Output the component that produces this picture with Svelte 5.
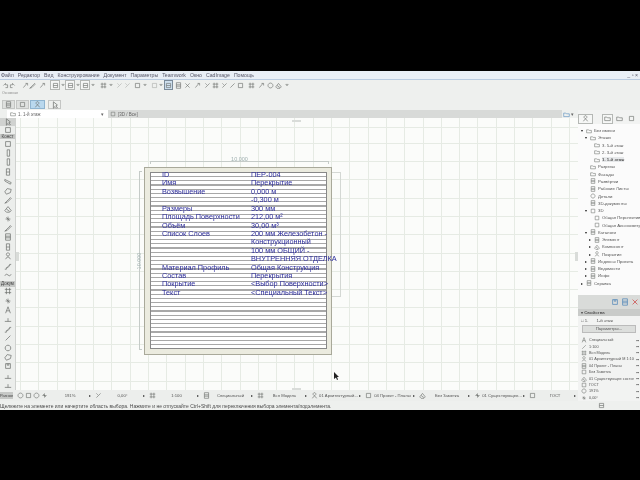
<script>
	const menu = ['Файл', 'Редактор', 'Вид', 'Конструирование', 'Документ', 'Параметры', 'Teamwork', 'Окно', 'CadImage', 'Помощь'];

	const icons = {
		undo: 'M2 5 L5 2 V4 H8 V8 H5',
		redo: 'M8 5 L5 2 V4 H2 V8 H5',
		pick: 'M2 8 L7 2 M5 2 H8 V5',
		drop: 'M1 9 L6 4 L8 2 L9 3 L4 8 Z',
		box: 'M2 2 H8 V8 H2 Z',
		boxl: 'M2 2 H8 V8 H2 Z M2 5 H8',
		hash: 'M3 1 V9 M7 1 V9 M1 3 H9 M1 7 H9',
		slash: 'M2 8 L8 2 M2 2 L4 4',
		wave: 'M1 6 Q3 2 5 5 T9 4',
		arrow: 'M3 1 L3 9 L5 7 L7 9 L8 8 L6 6 L8 5 Z',
		wall: 'M1 8 L3 2 L9 4 L7 9 Z',
		col: 'M4 1 H7 V9 H4 Z',
		beam: 'M1 3 L9 7 L8 9 L1 5 Z',
		slab: 'M1 6 L4 2 L9 3 L8 7 L3 9 Z',
		roof: 'M1 7 L5 2 L9 7 L7 9 H3 Z M3 5 L7 8',
		door: 'M3 1 H7 V9 H3 Z M3 5 H7',
		stair: 'M1 9 H3 V7 H5 V5 H7 V3 H9',
		circle: 'M5 1.5 A3.5 3.5 0 1 1 4.9 1.5 Z',
		text: 'M5 1 L2 9 M5 1 L8 9 M3 6 H7',
		line: 'M2 8 L8 2',
		dot: 'M1 8 H9 M5 8 L5 4',
		cross: 'M2 5 H8 M5 2 V8 M3 3 L7 7',
		folder: 'M1 3 H4 L5 4 H9 V8 H1 Z',
		sheet: 'M2 1 H8 V9 H2 Z M2 4 H8 M2 6 H8',
		person: 'M5 1 A2 2 0 1 1 4.9 1 Z M2 9 Q5 3 8 9',
		save: 'M2 2 H8 V8 H2 Z M4 2 V4 H6 V2',
		del: 'M2 2 L8 8 M8 2 L2 8',
		tri: 'M3 4 H7 L5 6.5 Z'
	};

	// icon, width, gap after, class
	const row1 = [
		['undo', 7, 0], ['redo', 7, 6], ['pick', 7, 0], ['drop', 7, 3], ['pick', 7, 4],
		['boxl', 10, 0, 'frame'], ['tri', 5, 0], ['boxl', 10, 0, 'frame'], ['tri', 5, 0], ['boxl', 10, 0, 'frame'], ['tri', 5, 4],
		['hash', 8, 1], ['tri', 5, 3], ['slash', 7, 1, 'dim'], ['slash', 7, 2, 'dim'], ['box', 8, 1], ['tri', 5, 3], ['box', 8, 0, 'dim'], ['tri', 5, 1],
		['boxl', 9, 1, 'frame on'], ['sheet', 8, 1], ['del', 8, 2], ['pick', 8, 2], ['slash', 8, 0], ['hash', 8, 1], ['slash', 8, 0],
		['line', 8, 0], ['box', 8, 3], ['hash', 8, 2], ['pick', 8, 1], ['circle', 8, 0], ['roof', 8, 2], ['tri', 5, 0]
	];

	const tools1 = ['box', 'col', 'col', 'door', 'beam', 'slab', 'drop', 'roof', 'cross', 'drop', 'sheet', 'door', 'person', 'stair', 'wave'];
	const tools2 = ['hash', 'cross', 'text', 'dot', 'stair', 'line', 'circle', 'slab', 'save', 'dot', 'dot'];

	const rows = [
		['ID', 'ПЕР-004'],
		['Имя', 'Перекрытие'],
		['Возвышение', '0,000 м'],
		['', '-0,300 м'],
		['Размеры', '300 мм'],
		['Площадь Поверхности', '212,00 м²'],
		['Объём', '30,00 м³'],
		['Список Слоев', '200 мм  Железобетон -'],
		['', 'Конструкционный'],
		['', '100 мм  ОБЩИЙ -'],
		['', 'ВНУТРЕННЯЯ ОТДЕЛКА'],
		['Материал Профиль', 'Общая Конструкция'],
		['Состав', 'Перекрытия'],
		['Покрытие', '<Выбор Поверхности>'],
		['Текст', '<Специальный Текст>']
	];

	// level, icon, name, expander, selected
	const tree = [
		[0, 'folder', 'Без имени', '▾'], [1, 'folder', 'Этажи', '▾'], [2, 'folder', '3. 5-й этаж'], [2, 'folder', '2. 3-й этаж'],
		[2, 'folder', '1. 1-й этаж', '', true], [1, 'folder', 'Разрезы'], [1, 'folder', 'Фасады'], [1, 'sheet', 'Развёртки'],
		[1, 'sheet', 'Рабочие Листы'], [1, 'circle', 'Детали'], [1, 'sheet', '3D-документы'], [1, 'box', '3D', '▾'],
		[2, 'box', 'Общая Перспектива'], [2, 'box', 'Общая Аксонометрия'], [1, 'sheet', 'Каталоги', '▾'], [2, 'sheet', 'Элемент', '▸'],
		[2, 'roof', 'Компонент', '▸'], [2, 'person', 'Покрытие', '▸'], [1, 'sheet', 'Индексы Проекта', '▸'], [1, 'sheet', 'Ведомости', '▸'],
		[1, 'sheet', 'Инфо', '▸'], [0, 'sheet', 'Справка', '▸']
	];

	const props = [
		['text', 'Специальный'], ['line', '1:100'], ['hash', 'Вся Модель'], ['person', '01 Архитектурный М 1:100'],
		['sheet', '04 Проект - Планы'], ['box', 'Без Заметка'], ['roof', '01 Существующее состоян...'],
		['box', 'ГОСТ'], ['circle', '191%'], ['cross', '0,00°']
	];

	const status = [
		['', '191%', 44], ['slash', '0,00°', 54], ['hash', '1:100', 54], ['sheet', 'Специальный', 54], ['hash', 'Вся Модель', 54],
		['person', '01 Архитектурный...', 54], ['box', '04 Проект - Планы', 54], ['roof', 'Без Заметка', 55],
		['cross', '01 Существующее...', 55], ['box', 'ГОСТ', 51]
	];
</script>

{#snippet ico(name, size = 8)}
	<svg class="ico" width={size} height={size} viewBox="0 0 10 10"><path d={icons[name]} /></svg>
{/snippet}

<div class="bar"></div>
<div class="app">
	<div class="menu">
		{#each menu as m}<span>{m}</span>{/each}
		<span class="winbtns">_ ▫ ×</span>
	</div>

	<div class="tb1">
		{#each row1 as [name, w, gap, cls]}
			<span class="tbi {cls || ''}" style="width:{w}px;margin-right:{gap}px">{@render ico(name, name === 'tri' ? 6 : 7)}</span>
		{/each}
	</div>

	<div class="tb2">
		<div class="tblabel">Основная</div>
		<div class="tbrow">
			<span class="btn">{@render ico('sheet', 7)}</span>
			<span class="btn">{@render ico('box', 7)}</span>
			<span class="btn blue">{@render ico('person', 7)}</span>
			<span class="btn flat">{@render ico('arrow', 8)}</span>
		</div>
	</div>

	<div class="work">
		<div class="left">
			<div class="tabs">
				<div class="tab">{@render ico('folder', 6)}<span>1. 1-й этаж</span><i>▾</i></div>
				<div class="tabrest">{@render ico('box', 6)}<span>[3D / Все]</span></div>
				<div class="tabend">{@render ico('folder', 7)}<i>▾</i></div>
			</div>

			<div class="main">
				<div class="toolbox">
					<span class="tool top current">{@render ico('arrow', 8)}</span>
					<span class="tool top">{@render ico('box', 8)}</span>
					<div class="tlabel">Конст</div>
					{#each tools1 as t}<span class="tool">{@render ico(t, 8)}</span>{/each}
					<div class="tlabel gap">Докум</div>
					{#each tools2 as t}<span class="tool">{@render ico(t, 8)}</span>{/each}
				</div>

				<div class="canvas">
					<div class="dim-h"><span>10.000</span></div>
					<div class="dim-v"><span>10.000</span></div>
					<div class="bracket"></div>
					<div class="mark m-top"></div>
					<div class="mark m-bottom"></div>
					<div class="mark m-left"></div>
					<div class="mark m-right"></div>
					<div class="slab">
						<div class="hatch">
							<div class="label">
								{#each rows as [k, v]}
									<span>{k}</span><span>{v}</span>
								{/each}
							</div>
						</div>
					</div>
					<svg class="cursor" width="6" height="9" viewBox="0 0 6 9"><path d="M0 0 V7 L2 5.5 L3 8 L4 7.5 L3 5 H5 Z" /></svg>
				</div>
			</div>

			<div class="status">
				<span class="ctl">
					<span class="other">Разное</span>
					{@render ico('circle', 7)}{@render ico('box', 7)}{@render ico('circle', 7)}{@render ico('cross', 7)}
				</span>
				{#each status as [icon, text, w]}
					<span class="cell" style="width:{w}px">
						{#if icon}{@render ico(icon, 7)}{/if}
						<span class="ctext">{text}</span>
						<i>▸</i>
					</span>
				{/each}
			</div>
		</div>

		<div class="side">
			<div class="sidetabs">
				<span class="tbi frame wide">{@render ico('person', 7)}</span>
				<span class="group">
					<span class="tbi frame">{@render ico('folder', 7)}</span>
					<span class="tbi">{@render ico('folder', 7)}</span>
					<span class="tbi">{@render ico('box', 7)}</span>
					<span class="tbi">{@render ico('sheet', 7)}</span>
				</span>
			</div>
			<div class="tree">
				{#each tree as [lvl, icon, name, exp, sel]}
					<div class="node" class:sel style="padding-left:{3 + lvl * 4}px"><i>{exp || ''}</i>{@render ico(icon, 6)}<span>{name}</span></div>
				{/each}
			</div>
			<div class="actions">
				<span class="act">{@render ico('save', 8)}</span>
				<span class="act">{@render ico('sheet', 8)}</span>
				<span class="act red">{@render ico('del', 8)}</span>
			</div>
			<div class="phead">▾ Свойства</div>
			<div class="floor"><span>□ 1.</span><span>1-й этаж</span></div>
			<div class="pbtn">Параметры...</div>
			<div class="pdiv"></div>
			{#each props as [icon, name]}
				<div class="prow">{@render ico(icon, 6)}<span class="pname">{name}</span><b>••</b></div>
			{/each}
		</div>
	</div>

	<div class="hint">
		<span>Щелкните на элементе или начертите область выбора. Нажмите и не отпускайте Ctrl+Shift для переключения выбора элемента/подэлемента.</span>
		<span class="hint-ico">{@render ico('boxl', 7)}</span>
	</div>
</div>
<div class="bar"></div>

<style>
	:global(body) {
		margin: 0;
		background: #000;
	}

	.bar {
		height: 71px;
		background: #000;
	}

	.bar:last-child {
		height: 70px;
	}

	.app {
		height: 339px;
		display: flex;
		flex-direction: column;
		background: #eef0ee;
		font-family: "Liberation Sans", sans-serif;
		color: #444;
		overflow: hidden;
		filter: blur(0.35px);
	}

	.ico {
		flex: none;
		fill: none;
		stroke: #6c6f6c;
		stroke-width: 0.9;
	}

	.menu {
		height: 9px;
		box-sizing: border-box;
		flex: none;
		display: flex;
		align-items: center;
		gap: 4px;
		padding-left: 1px;
		font-size: 5.2px;
		color: #556;
		background: #e9eff6;
		border-bottom: 1px solid #b9cbe0;
	}

	.winbtns {
		margin-left: auto;
		margin-right: 2px;
	}

	.tb1 {
		height: 10px;
		flex: none;
		display: flex;
		align-items: center;
		padding-left: 2px;
	}

	.tbi {
		height: 10px;
		display: inline-flex;
		align-items: center;
		justify-content: center;
		box-sizing: border-box;
		flex: none;
	}

	.dim {
		opacity: 0.5;
	}

	.frame {
		border: 1px solid #b5b8b5;
		background: #f6f7f6;
	}

	.on {
		background: #cfe0ee;
		border-color: #7b8b9a;
	}

	.tb2 {
		height: 20px;
		flex: none;
		box-sizing: border-box;
		padding: 1px 0 0 2px;
	}

	.tblabel {
		font-size: 3.5px;
		color: #888;
		height: 5px;
	}

	.tbrow {
		display: flex;
		gap: 1px;
		margin-top: 4px;
	}

	.btn {
		width: 13px;
		height: 9px;
		display: inline-flex;
		align-items: center;
		justify-content: center;
		background: #dfe1df;
		border: 1px solid #c4c6c4;
		box-sizing: border-box;
	}

	.blue {
		background: #b9d8ee;
		width: 15px;
		border-color: #8fb4d0;
	}

	.flat {
		background: #eef0ee;
		margin-left: 2px;
	}

	.work {
		flex: 1;
		display: flex;
		min-height: 0;
	}

	.left {
		width: 578px;
		flex: none;
		display: flex;
		flex-direction: column;
	}

	.tabs {
		height: 8px;
		flex: none;
		display: flex;
		align-items: stretch;
		font-size: 4.5px;
		color: #666;
	}

	.tab {
		width: 101px;
		margin-left: 7px;
		background: #fff;
		display: flex;
		align-items: center;
		gap: 2px;
		padding-left: 3px;
		box-sizing: border-box;
	}

	.tab i,
	.tabend i {
		margin-left: auto;
		margin-right: 4px;
		font-style: normal;
	}

	.tabrest {
		flex: 1;
		background: #d8dad8;
		display: flex;
		align-items: center;
		gap: 2px;
		padding-left: 2px;
	}

	.tabend {
		width: 16px;
		display: flex;
		align-items: center;
		padding-left: 1px;
		box-sizing: border-box;
	}

	.tabend .ico {
		stroke: #5b8fc0;
	}

	.main {
		height: 272px;
		flex: none;
		display: flex;
	}

	.toolbox {
		width: 16px;
		flex: none;
		display: flex;
		flex-direction: column;
		align-items: center;
		background: #eceeec;
		border-right: 1px solid #cfd1cf;
		box-sizing: border-box;
	}

	.tool {
		height: 9.38px;
		display: flex;
		align-items: center;
		flex: none;
	}

	.tool.top {
		height: 8px;
	}

	.current {
		width: 100%;
		justify-content: center;
		background: #d0d2d0;
	}

	.tlabel {
		width: 100%;
		height: 5px;
		line-height: 5px;
		font-size: 4.5px;
		background: #c6c8c6;
		color: #444;
		text-align: center;
		overflow: hidden;
		flex: none;
	}

	.tlabel.gap {
		height: 6px;
		line-height: 6px;
		margin-top: 1px;
	}

	.canvas {
		flex: 1;
		position: relative;
		background-color: #fbfcfa;
		background-image:
			repeating-linear-gradient(90deg, #e6ebe4 0 1px, transparent 1px 18.3px),
			repeating-linear-gradient(0deg, #e6ebe4 0 1px, transparent 1px 18.3px);
		background-position: 4px 0, 0 10px;
	}

	.dim-h {
		position: absolute;
		left: 134px;
		top: 43px;
		width: 179px;
		height: 3px;
		border: 1px solid #c5cbc8;
		border-bottom: 0;
		box-sizing: border-box;
	}

	.dim-h span {
		position: absolute;
		top: -6px;
		left: 0;
		right: 0;
		text-align: center;
		font-size: 5.5px;
		color: #9fb0b0;
	}

	.dim-v {
		position: absolute;
		left: 123px;
		top: 53px;
		width: 3px;
		height: 179px;
		border: 1px solid #c5cbc8;
		border-right: 0;
		box-sizing: border-box;
	}

	.dim-v span {
		position: absolute;
		left: -13px;
		top: 86px;
		width: 24px;
		text-align: center;
		font-size: 5.5px;
		color: #9fb0b0;
		transform: rotate(-90deg);
	}

	.bracket {
		position: absolute;
		left: 316px;
		top: 54px;
		width: 9px;
		height: 125px;
		border: 1px solid #d4d8d4;
		border-left: 0;
		box-sizing: border-box;
	}

	.mark {
		position: absolute;
		background: #d9dcd9;
	}

	.m-top {
		left: 276px;
		top: 2px;
		width: 9px;
		height: 2px;
	}

	.m-bottom {
		left: 276px;
		top: 270px;
		width: 9px;
		height: 2px;
	}

	.m-left {
		left: 0;
		top: 134px;
		width: 3px;
		height: 9px;
	}

	.m-right {
		right: 0;
		top: 134px;
		width: 3px;
		height: 9px;
	}

	.slab {
		position: absolute;
		left: 128px;
		top: 49px;
		width: 188px;
		height: 188px;
		padding: 4px 4px 5px 5px;
		box-sizing: border-box;
		background: #ebebdf;
		border: 1px solid #a9a99a;
	}

	.hatch {
		height: 100%;
		border: 1px solid #888;
		box-sizing: border-box;
		background: repeating-linear-gradient(180deg, #fff 0 3px, #a8a8a8 3px 4.2px);
	}

	.label {
		display: grid;
		grid-template-columns: 89px 1fr;
		grid-auto-rows: 8.43px;
		margin-top: -2px;
		padding-left: 11px;
		font-size: 7.3px;
		line-height: 8.43px;
		color: #2d2d9c;
		white-space: nowrap;
	}

	.cursor {
		position: absolute;
		left: 318px;
		top: 254px;
	}

	.cursor path {
		fill: #222;
	}

	.side {
		width: 62px;
		flex: none;
		padding-top: 3px;
		box-sizing: border-box;
		background: #f2f3f2;
		font-size: 4.3px;
		color: #555;
		white-space: nowrap;
		overflow: hidden;
		display: flex;
		flex-direction: column;
	}

	.sidetabs {
		height: 11px;
		display: flex;
		align-items: center;
		gap: 9px;
		flex: none;
	}

	.wide {
		width: 15px;
	}

	.group {
		display: inline-flex;
		gap: 1px;
	}

	.group .tbi {
		width: 11px;
	}

	.tree {
		height: 171px;
		padding-top: 3px;
		box-sizing: border-box;
		background: #fbfbfb;
		flex: none;
		overflow: hidden;
	}

	.node {
		height: 7.28px;
		display: flex;
		align-items: center;
		gap: 2px;
	}

	.node i {
		width: 3px;
		flex: none;
		font-style: normal;
		font-size: 4px;
		color: #222;
	}

	.node.sel span {
		background: #e6e8ea;
		font-weight: bold;
	}

	.actions {
		height: 14px;
		background: #d9dbd9;
		display: flex;
		align-items: center;
		justify-content: flex-end;
		gap: 2px;
		padding-right: 1px;
		flex: none;
	}

	.act .ico {
		stroke: #4f86b8;
	}

	.act.red .ico {
		stroke: #c44;
	}

	.phead {
		height: 7px;
		line-height: 7px;
		background: #c9cbc9;
		padding-left: 3px;
		font-weight: bold;
		flex: none;
	}

	.floor {
		display: flex;
		gap: 8px;
		height: 9px;
		align-items: center;
		padding-left: 3px;
		flex: none;
	}

	.pbtn {
		margin: 0 4px;
		height: 6px;
		line-height: 6px;
		text-align: center;
		background: #dcdedc;
		border: 1px solid #bbb;
		flex: none;
	}

	.pdiv {
		height: 4px;
		flex: none;
	}

	.prow {
		height: 6.4px;
		display: flex;
		align-items: center;
		gap: 2px;
		padding-left: 3px;
		flex: none;
	}

	.pname {
		flex: 1;
		min-width: 0;
		overflow: hidden;
		font-size: 3.8px;
	}

	.prow b {
		flex: none;
		margin-right: 1px;
		font-size: 4px;
		color: #333;
	}

	.status {
		height: 11px;
		flex: none;
		display: flex;
		align-items: center;
		background: #eceeec;
		font-size: 4.2px;
		color: #555;
		white-space: nowrap;
	}

	.ctl {
		width: 49px;
		flex: none;
		display: flex;
		align-items: center;
		gap: 1px;
	}

	.other {
		width: 13px;
		height: 7px;
		line-height: 7px;
		margin-right: 3px;
		background: #c6c8c6;
		font-size: 4px;
		color: #444;
		overflow: hidden;
	}

	.cell {
		flex: none;
		display: flex;
		align-items: center;
		box-sizing: border-box;
		padding: 0 2px;
		overflow: hidden;
	}

	.ctext {
		flex: 1;
		min-width: 0;
		text-align: center;
		overflow: hidden;
	}

	.cell i {
		flex: none;
		font-style: normal;
		font-size: 4px;
		color: #333;
	}

	.hint {
		height: 9px;
		flex: none;
		display: flex;
		align-items: center;
		font-size: 5px;
		color: #4a4a4a;
		background: #eef0ee;
		white-space: nowrap;
	}

	.hint-ico {
		margin-left: 267px;
		display: flex;
	}
</style>
